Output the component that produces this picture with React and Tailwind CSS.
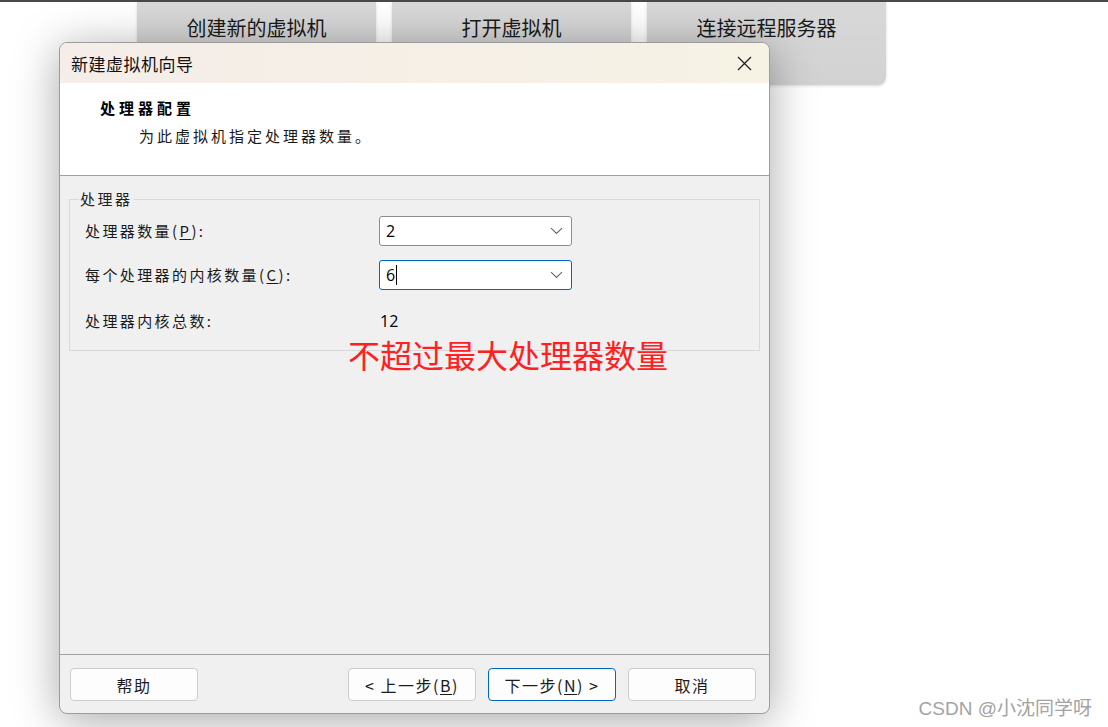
import React from "react";

const Combo = ({ value, focused }) => (
  <div
    className={`flex h-[30px] w-[193px] items-center justify-between rounded-[3px] border bg-white pl-[6px] pr-[8px] ${
      focused ? "border-[#0067c0]" : "border-[#8d8d8d]"
    }`}
  >
    <span className="flex items-center font-['Open_Sans',sans-serif] text-[16px] leading-none text-black">
      {value}
      {focused && <span className="ml-px inline-block h-[20px] w-px bg-black" />}
    </span>
    <svg width="13" height="8" viewBox="0 0 13 8">
      <path d="M1 1.2l5.5 5.3 5.5-5.3" stroke="#666" strokeWidth="1.1" fill="none" />
    </svg>
  </div>
);

const Btn = ({ children, primary }) => (
  <button
    className={`flex h-[33px] w-[128px] items-center justify-center rounded-[4px] border bg-[#fdfdfd] text-[16px] tracking-[1.5px] text-[#1b1b1b] ${
      primary ? "border-[#0067c0]" : "border-[#cccccc]"
    }`}
  >
    {children}
  </button>
);

const Tab = ({ label }) => (
  <div className="flex h-[83px] w-[239px] justify-center rounded-b-[8px] bg-gradient-to-b from-[#d8d8d8] to-[#d2d2d2] pt-[12px] text-[20px] leading-[28px] text-[#1a1a1a] shadow-[0_1px_3px_rgba(0,0,0,0.15)]">
    {label}
  </div>
);

const U = ({ children }) => <span className="underline underline-offset-2">{children}</span>;

export default function App() {
  return (
    <div className="relative h-[727px] w-full overflow-hidden bg-white font-['Noto_Sans_CJK_SC',sans-serif]">
      {/* top bar + toolbar tabs */}
      <div className="h-[2px] w-full bg-[#4a4a4a]" />
      <div className="ml-[137px] flex gap-[16px]">
        <Tab label="创建新的虚拟机" />
        <Tab label="打开虚拟机" />
        <Tab label="连接远程服务器" />
      </div>

      {/* wizard dialog */}
      <div className="absolute left-[59px] top-[42px] flex h-[672px] w-[711px] flex-col overflow-hidden rounded-[8px] border border-[#9c9c9c] bg-[#f0f0f0] shadow-[0_6px_45px_rgba(0,0,0,0.35)]">
        {/* title bar */}
        <div className="flex h-[40px] shrink-0 items-center justify-between bg-gradient-to-r from-[#f5ede9] to-[#f6f2e4] pl-[11px] pr-[17px]">
          <span className="text-[17px] leading-none tracking-[0.5px] text-[#111]">新建虚拟机向导</span>
          <svg width="15" height="15" viewBox="0 0 15 15">
            <path d="M1 1l13 13M14 1L1 14" stroke="#222" strokeWidth="1.3" />
          </svg>
        </div>

        {/* header */}
        <div className="h-[93px] shrink-0 border-b border-[#a0a0a0] bg-white pl-[40px] pt-[14px]">
          <div className="text-[15px] font-bold leading-[22px] tracking-[4px] text-black">处理器配置</div>
          <div className="mt-[6px] pl-[39px] text-[15px] leading-[22px] tracking-[3px] text-[#1a1a1a]">
            为此虚拟机指定处理器数量。
          </div>
        </div>

        {/* body */}
        <div className="relative flex-1 px-[9px] pt-[13px]">
          <fieldset className="border border-[#d9d9d9] pb-[14px]">
            <legend className="ml-[9px] px-px text-[15px] leading-[20px] tracking-[2.5px] text-[#222]">处理器</legend>
            <div className="mt-[7px] flex h-[30px] items-center pl-[15px]">
              <span className="w-[294px] text-[15px] tracking-[2.4px] text-[#1a1a1a]">
                处理器数量(<U>P</U>):
              </span>
              <Combo value="2" />
            </div>
            <div className="mt-[14px] flex h-[30px] items-center pl-[15px]">
              <span className="w-[294px] text-[15px] tracking-[2.4px] text-[#1a1a1a]">
                每个处理器的内核数量(<U>C</U>):
              </span>
              <Combo value="6" focused />
            </div>
            <div className="mt-[16px] flex h-[30px] items-center pl-[15px]">
              <span className="w-[295px] text-[15px] tracking-[2.4px] text-[#1a1a1a]">处理器内核总数:</span>
              <span className="font-['Open_Sans',sans-serif] text-[16px] text-black">12</span>
            </div>
          </fieldset>

          {/* annotation */}
          <div className="absolute left-[288px] top-[158px] text-[32px] leading-[40px] text-[#ff2121]">
            不超过最大处理器数量
          </div>
        </div>

        {/* footer */}
        <div className="flex h-[59px] shrink-0 items-start border-t border-[#a0a0a0] pl-[10px] pr-[13px] pt-[13px]">
          <Btn>帮助</Btn>
          <div className="ml-auto flex gap-[12px]">
            <Btn>&lt; 上一步(<U>B</U>)</Btn>
            <Btn primary>下一步(<U>N</U>) &gt;</Btn>
            <Btn>取消</Btn>
          </div>
        </div>
      </div>

      {/* watermark */}
      <div className="absolute bottom-[6px] right-[16px] font-['Liberation_Sans','Noto_Sans_CJK_SC',sans-serif] text-[19px] leading-[24px] text-[#a3a3a3]">
        CSDN @小沈同学呀
      </div>
    </div>
  );
}
